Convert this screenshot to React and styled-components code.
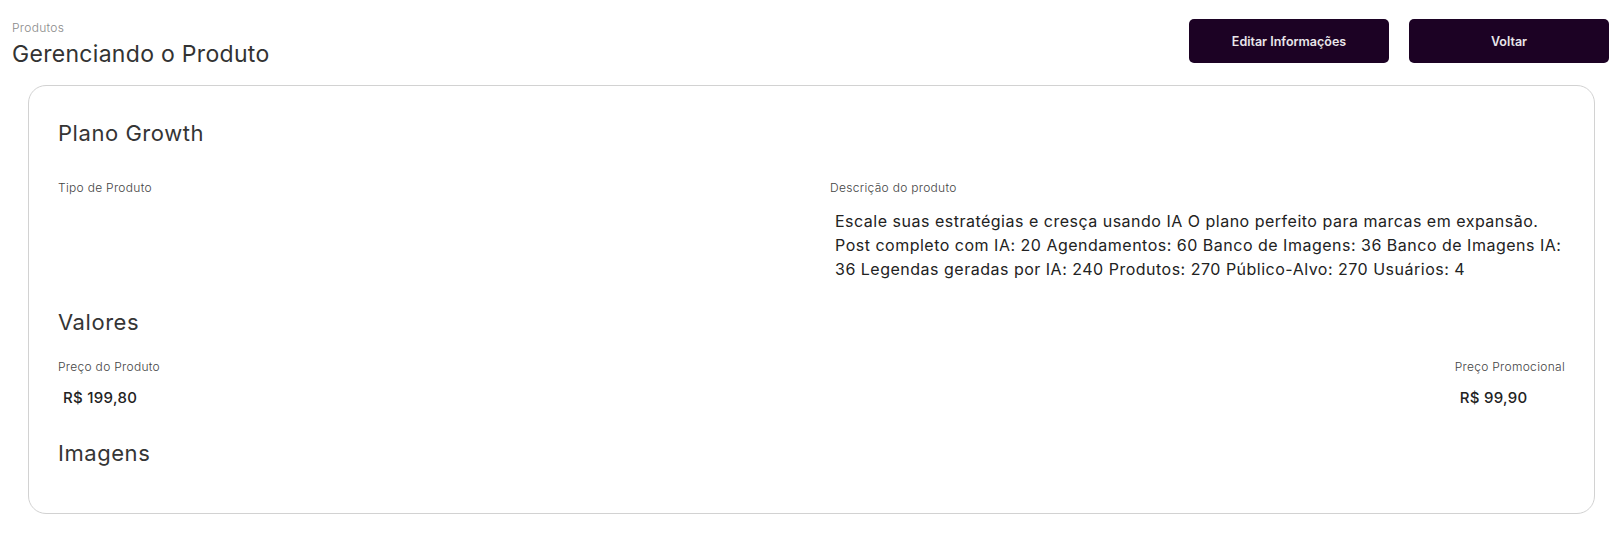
import styled, { createGlobalStyle } from "styled-components";

const GlobalStyle = createGlobalStyle`
  body {
    margin: 0;
    background: #fff;
    font-family: "Inter", "Noto Sans", sans-serif;
    color: #333;
  }
`;

const Page = styled.div`
  padding: 18px 0 20px 12px;
`;

const Header = styled.header`
  display: flex;
  justify-content: space-between;
  align-items: flex-start;
`;

const TitleBlock = styled.div`
  display: flex;
  flex-direction: column;
  padding-top: 2px;
`;

const Breadcrumb = styled.span`
  font-size: 12px;
  font-weight: 300;
  letter-spacing: 0.3px;
  color: #8a8a8a;
  line-height: 16px;
`;

const PageTitle = styled.h1`
  margin: 0;
  font-size: 23px;
  font-weight: 400;
  letter-spacing: 0.3px;
  color: #333;
  line-height: 36px;
`;

const Actions = styled.div`
  display: flex;
  gap: 20px;
  padding-top: 1px;
`;

const ActionButton = styled.button`
  width: 200px;
  height: 44px;
  border: none;
  border-radius: 5px;
  background: #1c0224;
  color: #e9e6ea;
  font-family: "Inter", "Liberation Sans", sans-serif;
  font-size: 12.5px;
  font-weight: 600;
  cursor: pointer;
`;

const Card = styled.section`
  margin: 13px 14px 0 16px;
  padding: 29px 29px 42px;
  border: 1px solid #d2d2d2;
  border-radius: 18px;
  display: flex;
  flex-direction: column;
`;

const SectionTitle = styled.h2`
  margin: 0;
  font-size: 22px;
  font-weight: 400;
  letter-spacing: 0.55px;
  color: #353535;
  line-height: 36px;
`;

const InfoGrid = styled.div`
  display: grid;
  grid-template-columns: 736px 1fr;
  column-gap: 36px;
  margin-top: 28px;
  margin-bottom: 23px;
`;

const Field = styled.div`
  display: flex;
  flex-direction: column;
`;

const Label = styled.span`
  font-size: 12px;
  font-weight: 300;
  letter-spacing: 0.3px;
  color: #444;
  line-height: 18px;
`;

const Description = styled.p`
  margin: 12px 0 0;
  padding-left: 5px;
  font-size: 16px;
  font-weight: 400;
  letter-spacing: 0.5px;
  color: #222;
  line-height: 24px;
`;

const PriceRow = styled.div`
  display: flex;
  justify-content: space-between;
  margin-top: 18px;
  margin-bottom: 27px;
`;

const Price = styled.span`
  margin-top: 12px;
  padding-left: 5px;
  font-size: 15px;
  font-weight: 500;
  letter-spacing: 0.3px;
  color: #222;
  line-height: 20px;
`;

export default function App() {
  return (
    <>
      <GlobalStyle />
      <Page>
        <Header>
          <TitleBlock>
            <Breadcrumb>Produtos</Breadcrumb>
            <PageTitle>Gerenciando o Produto</PageTitle>
          </TitleBlock>
          <Actions>
            <ActionButton>Editar Informações</ActionButton>
            <ActionButton>Voltar</ActionButton>
          </Actions>
        </Header>
        <Card>
          <SectionTitle>Plano Growth</SectionTitle>
          <InfoGrid>
            <Field>
              <Label>Tipo de Produto</Label>
            </Field>
            <Field>
              <Label>Descrição do produto</Label>
              <Description>
                Escale suas estratégias e cresça usando IA O plano perfeito para marcas em expansão.
                Post completo com IA: 20 Agendamentos: 60 Banco de Imagens: 36 Banco de Imagens IA:
                36 Legendas geradas por IA: 240 Produtos: 270 Público-Alvo: 270 Usuários: 4
              </Description>
            </Field>
          </InfoGrid>
          <SectionTitle>Valores</SectionTitle>
          <PriceRow>
            <Field>
              <Label>Preço do Produto</Label>
              <Price>R$ 199,80</Price>
            </Field>
            <Field>
              <Label>Preço Promocional</Label>
              <Price>R$ 99,90</Price>
            </Field>
          </PriceRow>
          <SectionTitle>Imagens</SectionTitle>
        </Card>
      </Page>
    </>
  );
}
